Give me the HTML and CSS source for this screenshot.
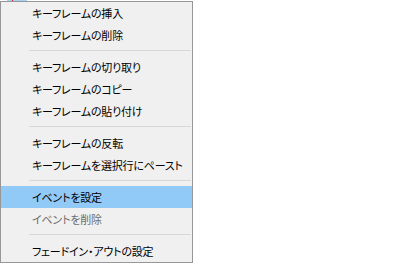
FILE: index.html
```html
<!DOCTYPE html>
<html lang="ja">
<head>
    <meta charset="UTF-8">
    <title>キーフレーム メニュー</title>
    <link rel="stylesheet" href="styles.css">
</head>
<body>
    <div class="track">
        <span class="track-clip"><span class="track-head"></span></span>
    </div>

    <ul class="context-menu">
        <li class="menu-item">キーフレームの挿入</li>
        <li class="menu-item">キーフレームの削除</li>
        <li class="menu-sep"></li>
        <li class="menu-item">キーフレームの切り取り</li>
        <li class="menu-item">キーフレームのコピー</li>
        <li class="menu-item">キーフレームの貼り付け</li>
        <li class="menu-sep"></li>
        <li class="menu-item">キーフレームの反転</li>
        <li class="menu-item">キーフレームを選択行にペースト</li>
        <li class="menu-sep"></li>
        <li class="menu-item active">イベントを設定</li>
        <li class="menu-item disabled">イベントを削除</li>
        <li class="menu-sep"></li>
        <li class="menu-item">フェードイン・アウトの設定</li>
    </ul>
</body>
</html>
```

FILE: styles.css
```css
body {
    margin: 0;
    background-color: #fff;
    font-family: "Noto Sans CJK JP", "Noto Sans", sans-serif;
    font-size: 11px;
    color: #000;
}
/* timeline strip peeking out above the menu */
.track {
    display: flex;
    height: 1px;
}
.track-clip {
    display: flex;
    margin-left: 7px;
    width: 20px;
    background-color: #a6d3f5;
}
.track-head {
    margin-left: 5px;
    width: 1px;
    background-color: #e02020;
}
.context-menu {
    list-style: none;
    margin: 0;
    padding: 0;
    width: 191px;
    background-color: #f0f0f0;
    border: 1px solid #979797;
}
.menu-item {
    height: 22px;
    line-height: 22px;
    padding-left: 31px;
    font-feature-settings: "palt";
    letter-spacing: -0.2px;
    white-space: nowrap;
}
.menu-item.active {
    background-color: #91c9f7;
}
.menu-item.disabled {
    color: #6d6d6d;
}
.menu-sep {
    height: 10px;
    padding-top: 4px;
    box-sizing: border-box;
    margin: 0 1px 0 28px;
}
.menu-sep::before {
    content: "";
    display: block;
    height: 1px;
    background-color: #d7d7d7;
}
```
